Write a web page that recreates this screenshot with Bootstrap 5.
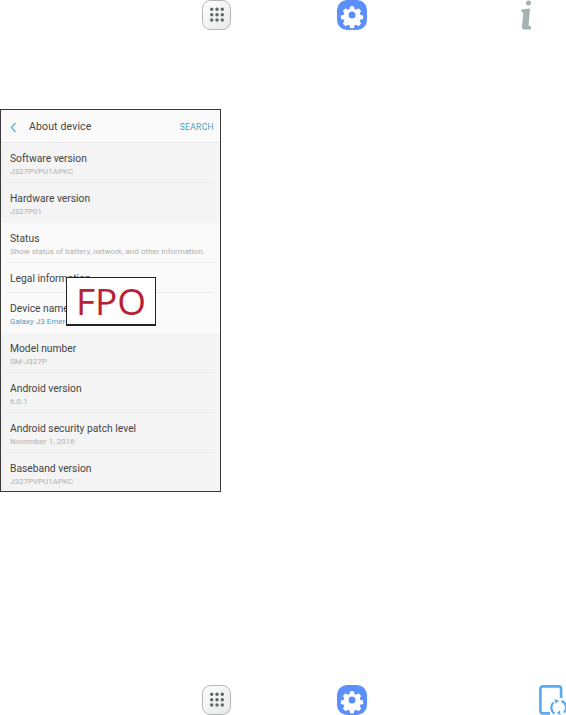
<!DOCTYPE html>
<html lang="en">
<head>
    <meta charset="UTF-8">
    <meta name="viewport" content="width=device-width, initial-scale=1.0">
    <title>About device</title>
    <link rel="stylesheet" href="https://cdn.jsdelivr.net/npm/bootstrap@5.3.0/dist/css/bootstrap.min.css">
    <style>
        html, body { height: 715px; overflow: hidden; background: #fff; }
        body { font-family: "Roboto", "Liberation Sans", sans-serif; }
        .page-wrap { height: 715px; }
        .icon-strip { height: 30px; }
        .icon-strip.bottom-strip { margin-top: 193px; }
        .slot-grid { width: 30px; margin-left: 202px; }
        .slot-gear { width: 30px; margin-left: 105px; }
        .slot-info { width: 12px; margin-left: 154px; }
        .slot-rotate { width: 28px; margin-left: 172px; }
        .strip-icon { display: block; }
        .phone-shot { width: 221px; height: 383px; margin-top: 79px; border: 1px solid #3a3a3a; background: #fafafa; overflow: hidden; }
        .shot-head { height: 33px; padding: 2px 6px 0 9px; background: #fafafa; border-bottom: 1px solid #e6e6e6; }
        .shot-title { font-size: 10.5px; color: #444; margin-left: 12px; letter-spacing: .15px; }
        .shot-search { font-size: 8.5px; color: #4a9fc0; letter-spacing: .35px; }
        .group-tint { background: #f4f4f4; }
        .group-white { background: #fafafa; }
        .group-round { border-radius: 4px; }
        .info-row { height: 40px; margin: 0 5px; padding-left: 4px; padding-top: 9px; border-bottom: 1px solid #ececec; }
        .info-row.short-row { height: 30px; }
        .info-row.last-row { border-bottom: 0; }
        .row-title { font-size: 10.3px; line-height: 13px; color: #444; white-space: nowrap; }
        .row-sub { font-size: 8px; line-height: 11px; margin-top: 1px; color: #b0b0b0; white-space: nowrap; }
        .row-sub.sub-link { color: #4a9fc0; }
        .fpo-box { position: absolute; left: 66px; top: 277px; width: 90px; height: 49px; background: #fff; border: 1px solid #222; border-bottom-width: 2px; color: #b92033; font-family: "Open Sans", "Liberation Sans", sans-serif; font-size: 37px; line-height: 46px; text-align: center; }
    </style>
</head>
<body>

<div class="page-wrap position-relative">

    <!-- top icons -->
    <div class="icon-strip d-flex align-items-start">
        <div class="slot-grid">
            <svg class="strip-icon" width="30" height="30" viewBox="0 0 30 30">
                <defs><linearGradient id="g1" x1="0" y1="0" x2="1" y2="1"><stop offset="0" stop-color="#fff"/><stop offset="1" stop-color="#e6e7e7"/></linearGradient></defs>
                <rect x=".5" y=".5" width="28" height="29" rx="8" fill="url(#g1)" stroke="#b4b6b6"/>
                <g fill="#5f6868"><circle cx="9.700" cy="9.300" r="1.700"/><circle cx="15" cy="9.300" r="1.700"/><circle cx="20.300" cy="9.300" r="1.700"/><circle cx="9.700" cy="14.700" r="1.700"/><circle cx="15" cy="14.700" r="1.700"/><circle cx="20.300" cy="14.700" r="1.700"/><circle cx="9.700" cy="20" r="1.700"/><circle cx="15" cy="20" r="1.700"/><circle cx="20.300" cy="20" r="1.700"/></g>
            </svg>
        </div>
        <div class="slot-gear">
            <svg class="strip-icon" width="30" height="30" viewBox="0 0 30 30">
                <rect width="30" height="30" rx="10" fill="#5b8ffb"/>
                <path fill="#fff" fill-rule="evenodd" d="M12.8 5h4.4l.6 3 2 .9 2.600-1.700 3.100 3.100-1.700 2.600.9 2 3 .6v4l-3 .6-.9 2 1.700 2.600-3.100 3.100-2.600-1.700-2 .9-.6 3h-4.400l-.6-3-2-.9-2.600 1.700-3.100-3.100 1.700-2.600-.9-2-3-.6v-4l3-.6.9-2-1.700-2.600 3.100-3.100 2.600 1.700 2-.9zM15 11a4 4 0 1 0 0 8 4 4 0 0 0 0-8z" transform="translate(1.9 1.9) scale(.875)"/>
            </svg>
        </div>
        <div class="slot-info">
            <svg class="strip-icon" width="12" height="30" viewBox="0 0 12 30">
                <circle cx="7.500" cy="3" r="2.500" fill="#a7b0b3"/>
                <path fill="#a7b0b3" d="M.5 9.500 9 8.500 7.600 25c0 1 .8 1.300 2.400 1.100l-.3 3.300H3.500c-2 0-2.700-1.200-2.500-3L2.300 12.500 .3 12.300z"/>
            </svg>
        </div>
    </div>

    <!-- device screenshot -->
    <div class="phone-shot">
        <div class="shot-head d-flex align-items-center">
            <svg width="7" height="11" viewBox="0 0 7 11"><path d="M5.500 1 1.300 5.500 5.500 10" fill="none" stroke="#5aa9c9" stroke-width="1.100"/></svg>
            <span class="shot-title flex-grow-1">About device</span>
            <span class="shot-search">SEARCH</span>
        </div>
        <div class="group-tint group-round">
            <div class="info-row"><div class="row-title">Software version</div><div class="row-sub">J327PVPU1APKC</div></div>
            <div class="info-row last-row"><div class="row-title">Hardware version</div><div class="row-sub">J327P01</div></div>
        </div>
        <div class="group-white">
            <div class="info-row"><div class="row-title">Status</div><div class="row-sub">Show status of battery, network, and other information.</div></div>
            <div class="info-row short-row"><div class="row-title">Legal information</div></div>
            <div class="info-row last-row"><div class="row-title">Device name</div><div class="row-sub sub-link">Galaxy J3 Emerge</div></div>
        </div>
        <div class="group-tint group-round">
            <div class="info-row"><div class="row-title">Model number</div><div class="row-sub">SM-J327P</div></div>
            <div class="info-row"><div class="row-title">Android version</div><div class="row-sub">6.0.1</div></div>
            <div class="info-row"><div class="row-title">Android security patch level</div><div class="row-sub">November 1, 2016</div></div>
            <div class="info-row last-row"><div class="row-title">Baseband version</div><div class="row-sub">J327PVPU1APKC</div></div>
        </div>
    </div>
    <div class="fpo-box">FPO</div>

    <!-- bottom icons -->
    <div class="icon-strip bottom-strip d-flex align-items-start">
        <div class="slot-grid">
            <svg class="strip-icon" width="30" height="30" viewBox="0 0 30 30">
                <rect x=".5" y=".5" width="28" height="29" rx="8" fill="url(#g1)" stroke="#b4b6b6"/>
                <g fill="#5f6868"><circle cx="9.700" cy="9.300" r="1.700"/><circle cx="15" cy="9.300" r="1.700"/><circle cx="20.300" cy="9.300" r="1.700"/><circle cx="9.700" cy="14.700" r="1.700"/><circle cx="15" cy="14.700" r="1.700"/><circle cx="20.300" cy="14.700" r="1.700"/><circle cx="9.700" cy="20" r="1.700"/><circle cx="15" cy="20" r="1.700"/><circle cx="20.300" cy="20" r="1.700"/></g>
            </svg>
        </div>
        <div class="slot-gear">
            <svg class="strip-icon" width="30" height="30" viewBox="0 0 30 30">
                <rect width="30" height="30" rx="10" fill="#5b8ffb"/>
                <path fill="#fff" fill-rule="evenodd" d="M12.8 5h4.4l.6 3 2 .9 2.600-1.700 3.100 3.100-1.700 2.600.9 2 3 .6v4l-3 .6-.9 2 1.700 2.600-3.100 3.100-2.600-1.700-2 .9-.6 3h-4.400l-.6-3-2-.9-2.600 1.700-3.100-3.100 1.700-2.600-.9-2-3-.6v-4l3-.6.9-2-1.700-2.600 3.100-3.100 2.600 1.700 2-.9zM15 11a4 4 0 1 0 0 8 4 4 0 0 0 0-8z" transform="translate(1.9 1.9) scale(.875)"/>
            </svg>
        </div>
        <div class="slot-rotate">
            <svg class="strip-icon" width="28" height="30" viewBox="0 0 28 30">
                <path d="M11 28.400H4a2.600 2.600 0 0 1-2.600-2.600V4A2.600 2.600 0 0 1 4 1.400h15.500A2.600 2.600 0 0 1 22.100 4v9" fill="none" stroke="#5aa9f5" stroke-width="2.600"/>
                <path d="M15.500 28.500a7 7 0 0 1-1-11M22.500 16a7 7 0 0 1 2.500 11.500" fill="none" stroke="#5aa9f5" stroke-width="2.200"/>
                <path d="M15.500 14l4.500 1.800-3.800 3zM21.500 30l-4-2 3.500-2.500z" fill="#5aa9f5"/>
            </svg>
        </div>
    </div>
</div>

<script src="https://cdn.jsdelivr.net/npm/bootstrap@5.3.0/dist/js/bootstrap.bundle.min.js"></script>
</body>
</html>
